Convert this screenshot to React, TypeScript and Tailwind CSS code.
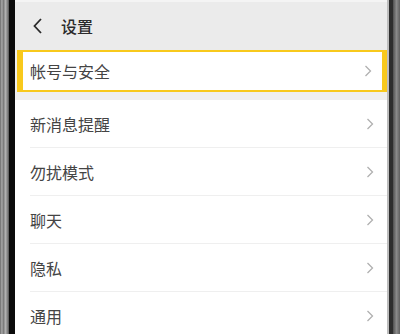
import React from "react";

const Chevron = () => (
  <svg width="8" height="12" viewBox="0 0 8 12" fill="none">
    <path d="M1.5 1 L6.5 6 L1.5 11" stroke="#b0b0b0" strokeWidth="1.3" />
  </svg>
);

const rows = ["新消息提醒", "勿扰模式", "聊天", "隐私", "通用"];

export default function App() {
  return (
    <div
      className="flex w-[400px] h-[334px] overflow-hidden"
      style={{ fontFamily: '"Noto Sans CJK SC", "Noto Sans", sans-serif' }}
    >
      <div className="w-[15px] h-full flex shrink-0">
        <div className="w-[9px] h-full bg-[linear-gradient(90deg,#6a6a6a_0%,#a8a8a8_20%,#7a7a7a_40%,#b4b4b4_60%,#8a8a8a_80%,#555_100%)]" />
        <div className="w-[6px] h-full bg-[#0b0b0b]" />
      </div>
      <div className="flex-1 h-full flex flex-col bg-white overflow-hidden">
        <div className="h-[50px] shrink-0 bg-[#ebebeb] border-t-2 border-[#f4f4f4] flex items-center pl-[16px]">
          <svg width="12" height="18" viewBox="0 0 12 18" fill="none" className="ml-[1px]">
            <path d="M9 2 L2.5 9 L9 16" stroke="#2a2a2a" strokeWidth="1.8" />
          </svg>
          <span className="ml-[17px] text-[16px] font-medium text-[#2b2b2b] leading-none">设置</span>
        </div>
        <div className="shrink-0 bg-[#efefef] pb-[8px] pl-[2px]">
          <div className="h-[42px] bg-white border-[#f8c91c] border-t-2 border-b-2 border-l-[6px] border-r-[5px] flex items-center justify-between pl-[7px] pr-[10px]">
            <span className="text-[16px] text-[#444]">帐号与安全</span>
            <Chevron />
          </div>
        </div>
        {rows.map((r, i) => (
          <div key={r} className="h-[48px] shrink-0 flex flex-col">
            <div className="flex-1 flex items-center justify-between pl-[15px] pr-[13px]">
              <span className="text-[16px] text-[#444]">{r}</span>
              <Chevron />
            </div>
            {i < rows.length - 1 && <div className="ml-[15px] h-px bg-[#efefef]" />}
          </div>
        ))}
      </div>
      <div className="w-[13px] h-full flex shrink-0">
        <div className="w-[2px] h-full bg-[#bdbdbd]" />
        <div className="w-[4px] h-full bg-[#2e2e2e]" />
        <div className="w-[7px] h-full bg-[linear-gradient(90deg,#505050_0%,#8a8a8a_50%,#606060_100%)]" />
      </div>
    </div>
  );
}
